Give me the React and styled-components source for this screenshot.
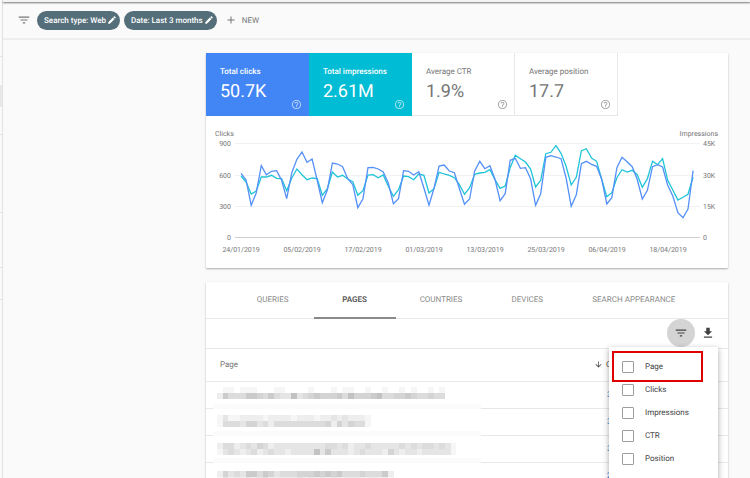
import React, { useState } from 'react';
import styled, { createGlobalStyle } from 'styled-components';
import {
	MdAdd,
	MdArrowDownward,
	MdEdit,
	MdFileDownload,
	MdFilterList,
	MdHelpOutline
} from 'react-icons/md';

const GlobalStyle = createGlobalStyle`
	* {
		box-sizing: border-box;
	}
	body {
		margin: 0;
		background: #fafafa;
		color: #757575;
		font-family: Roboto, 'Liberation Sans', sans-serif;
		font-size: 8px;
		text-rendering: geometricPrecision;
	}
	button {
		margin: 0;
		padding: 0;
		border: none;
		background: none;
		color: inherit;
		font: inherit;
		text-rendering: inherit;
		cursor: pointer;
	}
`;

const Shell = styled.div`
	display: flex;
	height: 100vh;
	overflow: hidden;
`;

const Rail = styled.div`
	flex: none;
	width: 3px;
	border-right: 1px solid #e2e2e2;
`;

const RailSection = styled.div`
	height: ${(props) => props.$height}px;
	border-bottom: 1px solid #e4e4e4;
	padding-top: ${(props) => (props.$active ? 28 : 0)}px;
`;

const RailActive = styled.div`
	height: 22px;
	background: #e8e8e8;
`;

const Main = styled.div`
	flex: 1;
	min-width: 0;
`;

const TopBar = styled.div`
	height: 2px;
	background: #f4f4f4;
	box-shadow: 0 1px 2px rgba(0, 0, 0, 0.55);
`;

const FilterBar = styled.div`
	display: flex;
	align-items: center;
	gap: 4px;
	height: 38px;
	padding: 0 14px;
	border-bottom: 2px solid #eeeeee;
`;

const BarIcon = styled.button`
	display: flex;
	width: 16px;
	font-size: 14px;
`;

const Chip = styled.button`
	display: flex;
	align-items: center;
	gap: 1px;
	height: 19px;
	padding: 0 3px 0 7px;
	border-radius: 10px;
	background: #546e7a;
	color: #ffffff;
	font-weight: 500;

	svg {
		font-size: 10px;
	}
`;

const NewButton = styled.button`
	display: flex;
	align-items: center;
	gap: 5px;
	padding-left: 4px;

	svg {
		font-size: 12px;
	}
`;

const Content = styled.div`
	display: flex;
	flex-direction: column;
	gap: 14px;
	padding: 13px 22px 0 203px;
`;

const Card = styled.section`
	background: #ffffff;
	border-radius: 1px;
	box-shadow: 0 1px 2px rgba(0, 0, 0, 0.32);
`;

const Metrics = styled.div`
	display: flex;
`;

const Metric = styled.button`
	position: relative;
	width: 103px;
	height: 63px;
	padding: 0 14px;
	text-align: left;
	background: ${(props) => props.$color || '#ffffff'};
	color: ${(props) => (props.$color ? '#ffffff' : '#757575')};
	box-shadow: ${(props) => (props.$color ? 'none' : 'inset -1px -1px #e8e8e8')};
	font-weight: ${(props) => (props.$color ? 500 : 400)};

	svg {
		position: absolute;
		right: 7px;
		bottom: 6px;
		font-size: 11px;
		opacity: 0.65;
	}
`;

const MetricLabel = styled.span`
	display: block;
	line-height: 10px;
`;

const MetricValue = styled.span`
	display: block;
	margin-top: 4px;
	font-size: 18px;
	font-weight: 400;
	line-height: 22px;
`;

const Chart = styled.svg`
	display: block;
	width: 100%;

	text {
		font-size: 7px;
		fill: #757575;
	}
`;

const Tabs = styled.div`
	display: flex;
	justify-content: center;
	padding-right: 3px;
	border-bottom: 1px solid #e8e8e8;
`;

const Tab = styled.button`
	min-width: 82px;
	height: 37px;
	margin-bottom: -1px;
	padding: 0 24px;
	border-bottom: 2px solid ${(props) => (props.$active ? '#8a8a8a' : 'transparent')};
	color: ${(props) => (props.$active ? '#616161' : '#8a8a8a')};
	font-weight: ${(props) => (props.$active ? 700 : 400)};
`;

const Toolbar = styled.div`
	position: relative;
	display: flex;
	align-items: flex-start;
	justify-content: flex-end;
	gap: 6px;
	height: 30px;
	padding-right: 13px;
	border-bottom: 1px solid #e8e8e8;
	color: #424242;
`;

const RoundButton = styled.button`
	display: flex;
	align-items: center;
	justify-content: center;
	width: ${(props) => (props.$active ? 28 : 14)}px;
	height: 28px;
	border-radius: 50%;
	background: ${(props) => (props.$active ? '#d4d4d4' : 'transparent')};
	font-size: 14px;
`;

const Menu = styled.div`
	position: absolute;
	z-index: 2;
	top: 28px;
	right: 10px;
	width: 109px;
	height: 160px;
	padding: 8px 3px;
	background: #ffffff;
	box-shadow: 0 2px 6px rgba(0, 0, 0, 0.35);
`;

const MenuItem = styled.label`
	position: relative;
	display: flex;
	align-items: center;
	gap: 11px;
	width: 91px;
	height: 23px;
	padding-left: 10px;
	color: #424242;
`;

const Marker = styled.span`
	position: absolute;
	inset: -4px 0;
	border: 2px solid #e00000;
`;

const Checkbox = styled.input`
	appearance: none;
	width: 12px;
	height: 12px;
	margin: 0;
	border: 1px solid #9e9e9e;
	border-radius: 1px;
	background: #ffffff;

	&:checked {
		background: #546e7a;
	}
`;

const Table = styled.table`
	width: 100%;
	table-layout: fixed;
	border-collapse: collapse;
`;

const Cell = styled.td`
	position: relative;
	height: 27px;
	padding: 0 0 0 14px;
	border-bottom: 1px solid #e8e8e8;
	color: #1e88e5;
`;

const ClicksCell = styled(Cell)`
	padding-left: 13px;
`;

const HeadCell = styled.th`
	width: ${(props) => (props.$sorted ? '134px' : 'auto')};
	height: 32px;
	padding: 0 0 0 ${(props) => (props.$sorted ? 0 : 14)}px;
	border-bottom: 1px solid #e8e8e8;
	font-weight: 400;
	text-align: left;
`;

const SortButton = styled.button`
	display: flex;
	align-items: center;
	gap: 3px;
	color: #424242;

	svg {
		font-size: 9px;
	}
`;

const Redacted = styled.svg`
	position: absolute;
	top: 0;
	left: 7px;
	width: 268px;
	height: 28px;
`;

// daily readings, measured down from the top of the plot in thirds of a unit
const clicks = [
	154, 174, 250, 213, 131, 158, 148, 146, 175, 230, 152, 112, 90, 121, 111, 175, 242, 203,
	123, 126, 134, 170, 188, 257, 231, 137, 136, 141, 150, 183, 245, 230, 146, 148, 159, 149,
	198, 250, 199, 132, 129, 147, 152, 200, 247, 231, 147, 118, 140, 131, 172, 236, 215, 115,
	109, 139, 137, 170, 250, 215, 106, 101, 105, 110, 168, 253, 218, 125, 118, 127, 133, 172,
	246, 227, 137, 106, 119, 134, 172, 231, 205, 134, 128, 135, 190, 222, 272, 287, 261, 146
];

const impressions = [
	162, 180, 216, 207, 165, 165, 160, 169, 170, 206, 168, 141, 158, 173, 168, 170, 220, 200,
	150, 165, 160, 171, 179, 220, 206, 159, 158, 167, 159, 193, 223, 203, 162, 164, 173, 156,
	160, 213, 200, 151, 156, 160, 167, 188, 217, 197, 157, 153, 151, 143, 173, 199, 192, 137,
	100, 110, 120, 141, 195, 175, 95, 91, 71, 94, 133, 189, 166, 86, 80, 108, 118, 172,
	224, 212, 167, 143, 150, 145, 158, 196, 170, 118, 128, 110, 175, 204, 234, 226, 217, 165
];

const dates = [
	'24/01/2019',
	'05/02/2019',
	'17/02/2019',
	'01/03/2019',
	'13/03/2019',
	'25/03/2019',
	'06/04/2019',
	'18/04/2019'
];

const gridLines = [
	{ y: 27, left: '900', right: '45K' },
	{ y: 59, left: '600', right: '30K' },
	{ y: 90, left: '300', right: '15K' },
	{ y: 121, left: '0', right: '0' }
];

// each digit is the darkness of one block
const rows = [
	{
		clicks: '3',
		top: 5,
		blocks: ['0110111000110000100010110010010010100101', '2644466546433734565556475556744556544544']
	},
	{
		clicks: '3',
		top: 6,
		blocks: ['131122221222212221223232221', '144435534244444444452535441']
	},
	{
		clicks: '3',
		top: 7,
		blocks: ['244234354233333333344342334333334343443431', '134323423433233337363332343332532332333331']
	},
	{
		clicks: '2',
		top: 8,
		blocks: ['2534366465344455565656444544462', '1322232342222232323232222222221']
	}
];

const metrics = [
	{ label: 'Total clicks', value: '50.7K', color: '#4285f4' },
	{ label: 'Total impressions', value: '2.61M', color: '#00bcd4' },
	{ label: 'Average CTR', value: '1.9%' },
	{ label: 'Average position', value: '17.7' }
];

const tabs = ['QUERIES', 'PAGES', 'COUNTRIES', 'DEVICES', 'SEARCH APPEARANCE'];
const filters = ['Page', 'Clicks', 'Impressions', 'CTR', 'Position'];

function toPoints(series) {
	return series.map((y, i) => `${(35 + i * 5.08).toFixed(1)},${(6 + y / 3).toFixed(1)}`).join(' ');
}

function PerformanceChart() {
	return (
		<Chart viewBox='0 0 522 152' role='img' aria-label='Clicks and impressions by day'>
			<text x='9' y='20'>Clicks</text>
			<text x='512' y='20' textAnchor='end'>Impressions</text>
			{gridLines.map((line) => (
				<g key={line.y}>
					<rect
						x='29'
						y={line.y}
						width='465'
						height='1'
						fill={line.left === '0' ? '#cfcfcf' : '#f2f2f2'}
					/>
					<text x='25' y={line.y + 3} textAnchor='end'>{line.left}</text>
					<text x='497' y={line.y + 3}>{line.right}</text>
				</g>
			))}
			<polyline points={toPoints(impressions)} fill='none' stroke='#1fc4d8' strokeWidth='1.3' />
			<polyline points={toPoints(clicks)} fill='none' stroke='#5590f6' strokeWidth='1.3' />
			{dates.map((date, i) => (
				<text key={date} x={35 + i * 61} y='136' textAnchor='middle'>{date}</text>
			))}
		</Chart>
	);
}

function RedactedText({ blocks, top }) {
	return (
		<Redacted viewBox='0 0 268 28' shapeRendering='crispEdges' aria-hidden='true'>
			<rect width='268' height='28' fill='#ffffff' />
			<rect y='22' width='268' height='6' fill='#fbfbfb' />
			{blocks.map((line, row) =>
				line.split('').map((shade, col) => (
					<rect
						key={`${row}-${col}`}
						x={4 + col * 5.7}
						y={top + row * 6}
						width='5.7'
						height='6'
						fill={`rgba(0, 0, 0, ${Number(shade) * 0.034})`}
					/>
				))
			)}
		</Redacted>
	);
}

export default function App() {
	const [activeTab, setActiveTab] = useState('PAGES');
	const [menuOpen, setMenuOpen] = useState(true);

	return (
		<Shell>
			<GlobalStyle />
			<Rail>
				<RailSection $height={57} />
				<RailSection $height={78} $active>
					<RailActive />
				</RailSection>
				<RailSection $height={78} />
				<RailSection $height={55} />
				<RailSection $height={32} />
			</Rail>
			<Main>
				<TopBar />
				<FilterBar>
					<BarIcon aria-label='Filters'>
						<MdFilterList />
					</BarIcon>
					<Chip>
						Search type: Web
						<MdEdit />
					</Chip>
					<Chip>
						Date: Last 3 months
						<MdEdit />
					</Chip>
					<NewButton>
						<MdAdd />
						NEW
					</NewButton>
				</FilterBar>
				<Content>
					<Card>
						<Metrics>
							{metrics.map((metric) => (
								<Metric key={metric.label} $color={metric.color}>
									<MetricLabel>{metric.label}</MetricLabel>
									<MetricValue>{metric.value}</MetricValue>
									<MdHelpOutline />
								</Metric>
							))}
						</Metrics>
						<PerformanceChart />
					</Card>
					<Card>
						<Tabs role='tablist'>
							{tabs.map((tab) => (
								<Tab
									key={tab}
									role='tab'
									aria-selected={tab === activeTab}
									$active={tab === activeTab}
									onClick={() => setActiveTab(tab)}
								>
									{tab}
								</Tab>
							))}
						</Tabs>
						<Toolbar>
							<RoundButton
								$active={menuOpen}
								aria-label='Filter rows'
								onClick={() => setMenuOpen(!menuOpen)}
							>
								<MdFilterList />
							</RoundButton>
							<RoundButton aria-label='Download'>
								<MdFileDownload />
							</RoundButton>
							{menuOpen && (
								<Menu>
									{filters.map((name) => (
										<MenuItem key={name}>
											<Checkbox type='checkbox' name={name} />
											{name}
											{name === 'Page' && <Marker />}
										</MenuItem>
									))}
								</Menu>
							)}
						</Toolbar>
						<Table>
							<thead>
								<tr>
									<HeadCell>Page</HeadCell>
									<HeadCell $sorted>
										<SortButton>
											<MdArrowDownward />
											Clicks
										</SortButton>
									</HeadCell>
								</tr>
							</thead>
							<tbody>
								{rows.map((row, i) => (
									<tr key={i}>
										<Cell>
											<RedactedText blocks={row.blocks} top={row.top} />
										</Cell>
										<ClicksCell>{row.clicks}</ClicksCell>
									</tr>
								))}
							</tbody>
						</Table>
					</Card>
				</Content>
			</Main>
		</Shell>
	);
}
